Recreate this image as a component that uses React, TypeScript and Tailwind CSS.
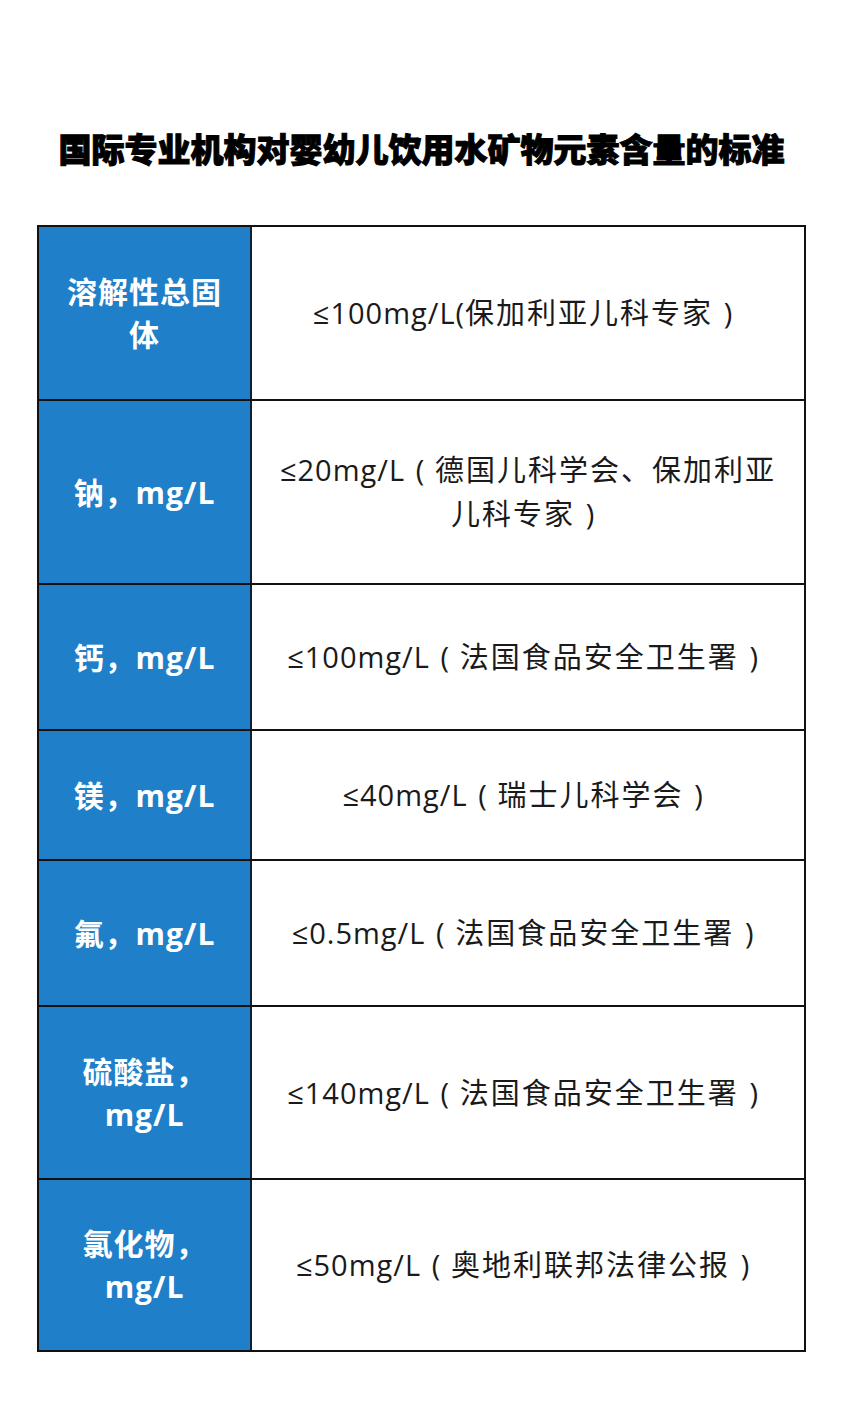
const rows = [
  { label: ['溶解性总固体'], value: '≤100mg/L(保加利亚儿科专家）', h: 'h-[172px]' },
  { label: ['钠，mg/L'], value: '≤20mg/L（德国儿科学会、保加利亚儿科专家）', h: 'h-[184px]' },
  { label: ['钙，mg/L'], value: '≤100mg/L（法国食品安全卫生署）', h: 'h-[146px]' },
  { label: ['镁，mg/L'], value: '≤40mg/L（瑞士儿科学会）', h: 'h-[130px]' },
  { label: ['氟，mg/L'], value: '≤0.5mg/L（法国食品安全卫生署）', h: 'h-[146px]' },
  { label: ['硫酸盐，', 'mg/L'], value: '≤140mg/L（法国食品安全卫生署）', h: 'h-[173px]' },
  { label: ['氯化物，', 'mg/L'], value: '≤50mg/L（奥地利联邦法律公报）', h: 'h-[172px]' },
];

// brackets in the picture sit in the middle of a full cell, so draw them as
// a plain paren centred in a 1em box; latin runs are set a little tighter than the CJK ones
function Value({ text }: { text: string }) {
  return (
    <>
      {text.split(/([（）]|[≤0-9a-zA-Z./(]+)/).filter(Boolean).map((part, i) => {
        if (part === '（' || part === '）') {
          return (
            <span key={i} className="inline-block w-[30px] text-center tracking-normal">
              {part === '（' ? '(' : ')'}
            </span>
          );
        }
        if (/^[≤0-9a-zA-Z./(]+$/.test(part)) {
          return (
            <span key={i} className="tracking-[1px]">
              {part}
            </span>
          );
        }
        return (
          <span key={i} className="tracking-[2px]">
            {part}
          </span>
        );
      })}
    </>
  );
}

export default function App() {
  return (
    <div
      className="w-[843px] h-[1417px] bg-white"
      style={{ fontFamily: '"Open Sans", "Noto Sans CJK SC", sans-serif' }}
    >
      <div className="pt-[126px] h-[225px]">
        <h1 className="text-center text-[33px] leading-[44px] font-black text-black [-webkit-text-stroke:1px_black] [font-family:'Noto_Sans_CJK_SC',sans-serif]">
          国际专业机构对婴幼儿饮用水矿物元素含量的标准
        </h1>
      </div>
      <div className="ml-[37px] w-[769px] border-2 border-[#111]">
        {rows.map((r, i) => (
          <div key={i} className={`flex ${r.h} ${i > 0 ? 'border-t-2 border-[#111]' : ''}`}>
            <div className="w-[213px] shrink-0 bg-[#1f80c9] border-r-2 border-[#0d1f33] flex flex-col items-center justify-center px-[20px] text-white font-bold text-[30px] tracking-[1px] leading-[43px] text-center">
              {r.label.map((l, j) => (
                <span key={j}>{l}</span>
              ))}
            </div>
            <div className="flex-1 flex items-center justify-center px-[20px] text-center text-[29px] leading-[44px] text-[#1a1a1a]">
              <p>
                <Value text={r.value} />
              </p>
            </div>
          </div>
        ))}
      </div>
    </div>
  );
}
